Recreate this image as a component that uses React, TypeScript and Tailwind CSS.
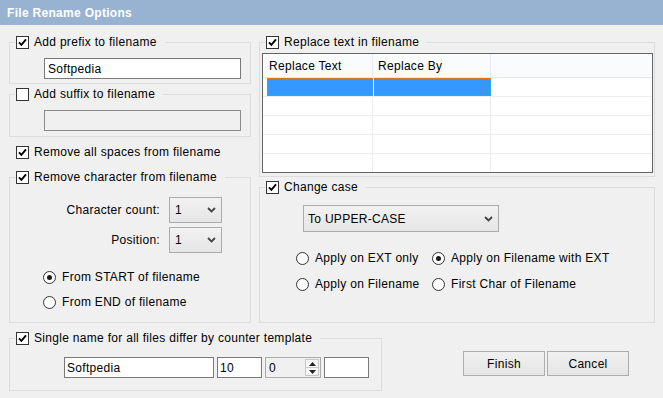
import type { ReactNode } from 'react';

function Check({ checked }: { checked: boolean }) {
  return (
    <span className="flex h-[13px] w-[13px] shrink-0 items-center justify-center border border-[#333] bg-white">
      {checked && (
        <svg width="9" height="9" viewBox="0 0 9 9">
          <path d="M1 4.3 L3.4 6.9 L8 1.3" stroke="#000" strokeWidth="1.9" fill="none" />
        </svg>
      )}
    </span>
  );
}

function Radio({ on, label }: { on?: boolean; label: string }) {
  return (
    <div className="flex items-center gap-[6px]">
      <span className="flex h-[13px] w-[13px] shrink-0 items-center justify-center rounded-full border border-[#333] bg-white">
        {on && <span className="h-[5px] w-[5px] rounded-full bg-[#1a1a1a]" />}
      </span>
      <span>{label}</span>
    </div>
  );
}

function Chevron() {
  return (
    <svg width="9" height="6" viewBox="0 0 9 6">
      <path d="M1 1 L4.5 4.5 L8 1" stroke="#444" strokeWidth="1.8" fill="none" />
    </svg>
  );
}

function Group({
  label,
  checked,
  className,
  children,
}: {
  label: string;
  checked: boolean;
  className: string;
  children?: ReactNode;
}) {
  return (
    <fieldset className={`border border-[#dcdcdc] ${className}`}>
      <legend className="ml-[5px] flex h-[14px] items-center gap-[5px] pl-px pr-[8px]">
        <Check checked={checked} />
        <span>{label}</span>
      </legend>
      {children}
    </fieldset>
  );
}

const rows = [0, 1, 2, 3, 4];

export default function App() {
  return (
    <div className="relative flex h-[398px] w-[663px] flex-col overflow-hidden bg-[#f0f0f0] font-['Liberation_Sans',Arial,sans-serif] text-[12px] leading-[14px] tracking-[0.3px] text-black">
      <div className="flex h-[25px] shrink-0 items-center bg-[#97b3d1] pl-[7px] text-[12px] font-bold text-white">
        File Rename Options
      </div>

      <div className="flex flex-col pl-[9px] pt-[10px]">
        <div className="flex gap-[8px]">
          {/* left column */}
          <div className="flex w-[242px] flex-col">
            <Group label="Add prefix to filename" checked className="h-[49px]">
              <div className="pl-[34px] pt-[9px]">
                <div className="flex h-[21px] w-[197px] items-center border border-[#7a7a7a] bg-white pl-[3px]">
                  Softpedia
                </div>
              </div>
            </Group>
            <Group label="Add suffix to filename" checked={false} className="mt-[3px] h-[50px]">
              <div className="pl-[34px] pt-[9px]">
                <div className="h-[21px] w-[197px] border border-[#8a8a8a] bg-[#f0f0f0]" />
              </div>
            </Group>
            <div className="mt-[8px] flex h-[14px] items-center gap-[5px] pl-[7px]">
              <Check checked />
              <span>Remove all spaces from filename</span>
            </div>
            <Group label="Remove character from filename" checked className="mt-[11px] h-[153px]">
              <div className="flex flex-col gap-[4px] pt-[13px]">
                {['Character count:', 'Position:'].map((l) => (
                  <div key={l} className="flex items-center gap-[9px]">
                    <span className="w-[150px] text-right">{l}</span>
                    <div className="flex h-[26px] w-[53px] items-center justify-between border border-[#acacac] bg-gradient-to-b from-[#f2f2f2] to-[#e5e5e5] pl-[5px] pr-[5px]">
                      <span>1</span>
                      <Chevron />
                    </div>
                  </div>
                ))}
              </div>
              <div className="mt-[17px] flex flex-col gap-[11px] pl-[33px]">
                <Radio on label="From START of filename" />
                <Radio label="From END of filename" />
              </div>
            </Group>
          </div>

          {/* right column */}
          <div className="flex w-[396px] flex-col">
            <Group label="Replace text in filename" checked className="h-[142px]">
              <div className="pl-[2px] pt-[4px]">
                <div className="h-[120px] w-[391px] overflow-hidden border border-[#646464] bg-white">
                  <div className="flex h-[24px] border-b border-[#dfe8f3] bg-[#fafbfc]">
                    <div className="flex w-[110px] items-center border-r border-[#e3ebf5] pl-[6px]">Replace Text</div>
                    <div className="flex w-[118px] items-center border-r border-[#e3ebf5] pl-[5px]">Replace By</div>
                    <div className="flex-1" />
                  </div>
                  {rows.map((r) => (
                    <div key={r} className="flex h-[19px] border-b border-[#ededed]">
                      <div
                        className={
                          r === 0
                            ? 'ml-[4px] w-[106px] border-y border-l border-dotted border-[#e07b1a] bg-[#3399ff]'
                            : 'w-[110px] border-r border-[#ededed]'
                        }
                      />
                      {r === 0 && <div className="w-px bg-white" />}
                      <div
                        className={
                          r === 0
                            ? 'w-[117px] border-y border-r border-dotted border-[#e07b1a] bg-[#3399ff]'
                            : 'w-[118px] border-r border-[#ededed]'
                        }
                      />
                      <div className="flex-1" />
                    </div>
                  ))}
                </div>
              </div>
            </Group>
            <Group label="Change case" checked className="mt-[3px] h-[143px]">
              <div className="pl-[43px] pt-[11px]">
                <div className="flex h-[27px] w-[196px] items-center justify-between border border-[#acacac] bg-gradient-to-b from-[#f2f2f2] to-[#e5e5e5] pl-[4px] pr-[5px]">
                  <span>To UPPER-CASE</span>
                  <Chevron />
                </div>
              </div>
              <div className="grid w-fit grid-cols-[136px_auto] gap-y-[12px] pl-[36px] pt-[19px]">
                <Radio label="Apply on EXT only" />
                <Radio on label="Apply on Filename with EXT" />
                <Radio label="Apply on Filename" />
                <Radio label="First Char of Filename" />
              </div>
            </Group>
          </div>
        </div>

        {/* bottom row */}
        <div className="mt-[8px] flex items-start">
          <Group label="Single name for all files differ by counter template" checked className="h-[60px] w-[373px]">
            <div className="flex gap-[3px] pl-[54px] pt-[12px]">
              <div className="flex h-[21px] w-[150px] items-center border border-[#7a7a7a] bg-white pl-[2px]">Softpedia</div>
              <div className="flex h-[21px] w-[45px] items-center border border-[#7a7a7a] bg-white pl-[2px]">10</div>
              <div className="flex h-[21px] w-[56px] items-center justify-between border border-[#acacac] bg-[#f0f0f0] pl-[3px] pr-[1px]">
                <span>0</span>
                <div className="flex h-[17px] w-[14px] flex-col border border-[#c8c8c8] bg-[#f7f7f7]">
                  <div className="flex flex-1 items-center justify-center border-b border-[#c8c8c8]">
                    <svg width="7" height="4" viewBox="0 0 7 4">
                      <path d="M0 4 L3.5 0 L7 4 Z" fill="#222" />
                    </svg>
                  </div>
                  <div className="flex flex-1 items-center justify-center">
                    <svg width="7" height="4" viewBox="0 0 7 4">
                      <path d="M0 0 L3.5 4 L7 0 Z" fill="#222" />
                    </svg>
                  </div>
                </div>
              </div>
              <div className="h-[21px] w-[45px] border border-[#7a7a7a] bg-white" />
            </div>
          </Group>
          <div className="ml-[81px] mt-[20px] flex gap-[2px]">
            {['Finish', 'Cancel'].map((b) => (
              <button
                key={b}
                className="flex h-[25px] w-[82px] items-center justify-center border border-[#adadad] bg-gradient-to-b from-[#f0f0f0] to-[#e5e5e5]"
              >
                {b}
              </button>
            ))}
          </div>
        </div>
      </div>
    </div>
  );
}
